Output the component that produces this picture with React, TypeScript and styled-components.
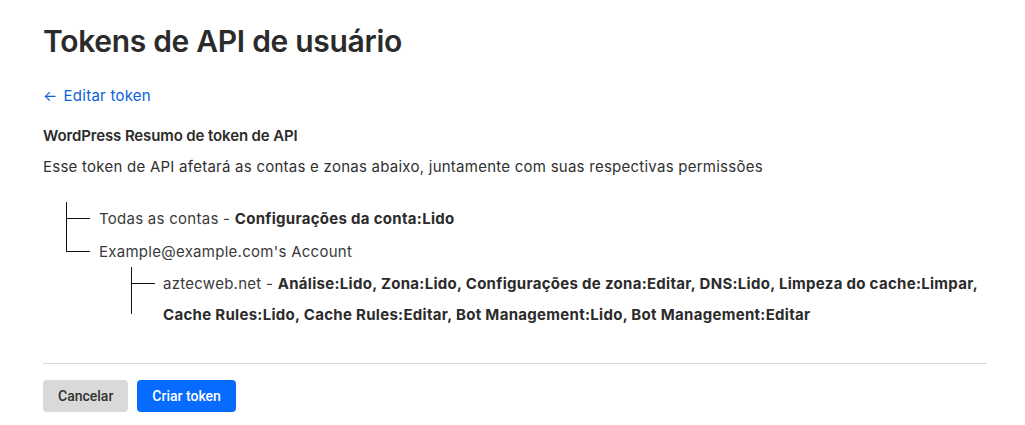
import React from "react";
import styled, { createGlobalStyle } from "styled-components";

const GlobalStyle = createGlobalStyle`
  html, body { margin: 0; padding: 0; background: #ffffff; }
  body {
    font-family: Inter, "Noto Sans", "Liberation Sans", sans-serif;
    color: #313131;
    -webkit-font-smoothing: antialiased;
  }
`;

const Page = styled.main`
  padding: 23px 38px 0 43px;
`;

const Heading = styled.h1`
  margin: 0;
  font-size: 30px;
  line-height: 36px;
  font-weight: 600;
  color: #2b2b2b;
  letter-spacing: -0.3px;
`;

const BackLink = styled.a`
  display: inline-flex;
  align-items: center;
  gap: 6px;
  margin-top: 27px;
  font-size: 15px;
  line-height: 20px;
  letter-spacing: 0.25px;
  color: #0a62d8;
  text-decoration: none;
  cursor: pointer;
`;

const Arrow = styled.span`
  font-size: 15px;
  line-height: 20px;
`;

const SummaryTitle = styled.h2`
  margin: 20px 0 0;
  font-size: 15px;
  line-height: 20px;
  font-weight: 600;
  letter-spacing: -0.12px;
  color: #2b2b2b;
`;

const Description = styled.p`
  margin: 11px 0 0;
  font-size: 15px;
  line-height: 20px;
  letter-spacing: 0.25px;
  color: #313131;
`;

const Tree = styled.ul<{ $indent: number; $top: number }>`
  list-style: none;
  margin: ${(p) => p.$top}px 0 0 ${(p) => p.$indent}px;
  padding: 0;
`;

type Stem = "full" | "half" | "wrap";

const Node = styled.li<{ $stem: Stem; $pad: number }>`
  position: relative;
  padding-left: ${(p) => p.$pad}px;

  &::before {
    content: "";
    position: absolute;
    left: 0;
    width: 1px;
    background: #111;
    top: ${(p) => (p.$stem === "wrap" ? "-1px" : "0")};
    ${(p) =>
      p.$stem === "full"
        ? "bottom: 0;"
        : p.$stem === "half"
        ? "height: 17px;"
        : "bottom: 16px;"}
  }
`;

const Label = styled.div<{ $lh: number; $pad: number }>`
  position: relative;
  font-size: 15px;
  line-height: ${(p) => p.$lh}px;
  letter-spacing: 0.27px;
  color: #3a3a3a;

  &::after {
    content: "";
    position: absolute;
    left: ${(p) => -p.$pad}px;
    top: ${(p) => Math.floor(p.$lh / 2)}px;
    width: 24px;
    height: 1px;
    background: #111;
  }
`;

const Perm = styled.strong`
  font-weight: 700;
  letter-spacing: 0.3px;
  color: #2b2b2b;
`;

const Divider = styled.hr`
  margin: 33px 0 0;
  border: 0;
  border-top: 1px solid #d9d9d9;
  height: 0;
`;

const Actions = styled.div`
  display: flex;
  gap: 9px;
  margin-top: 16px;
`;

const Button = styled.button<{ $primary?: boolean }>`
  height: 32px;
  padding: 0 15px;
  border: 0;
  border-radius: 4px;
  font-family: Roboto, "Liberation Sans", sans-serif;
  font-size: 14px;
  font-weight: 500;
  cursor: pointer;
  background: ${(p) => (p.$primary ? "#086bff" : "#d9d9d9")};
  color: ${(p) => (p.$primary ? "#ffffff" : "#313131")};
`;

export default function App() {
  return (
    <>
      <GlobalStyle />
      <Page>
        <Heading>Tokens de API de usuário</Heading>
        <BackLink>
          <Arrow>←</Arrow>
          Editar token
        </BackLink>
        <SummaryTitle>WordPress Resumo de token de API</SummaryTitle>
        <Description>
          Esse token de API afetará as contas e zonas abaixo, juntamente com
          suas respectivas permissões
        </Description>
        <Tree $indent={23} $top={25}>
          <Node $stem="full" $pad={33}>
            <Label $lh={33} $pad={33}>
              Todas as contas - <Perm>Configurações da conta:Lido</Perm>
            </Label>
          </Node>
          <Node $stem="half" $pad={33}>
            <Label $lh={33} $pad={33}>
              Example@example.com's Account
            </Label>
            <Tree $indent={32} $top={0}>
              <Node $stem="wrap" $pad={32}>
                <Label $lh={31} $pad={32}>
                  aztecweb.net -{" "}
                  <Perm>
                    Análise:Lido, Zona:Lido, Configurações de zona:Editar,
                    DNS:Lido, Limpeza do cache:Limpar, Cache Rules:Lido, Cache
                    Rules:Editar, Bot Management:Lido, Bot Management:Editar
                  </Perm>
                </Label>
              </Node>
            </Tree>
          </Node>
        </Tree>
        <Divider />
        <Actions>
          <Button>Cancelar</Button>
          <Button $primary>Criar token</Button>
        </Actions>
      </Page>
    </>
  );
}
